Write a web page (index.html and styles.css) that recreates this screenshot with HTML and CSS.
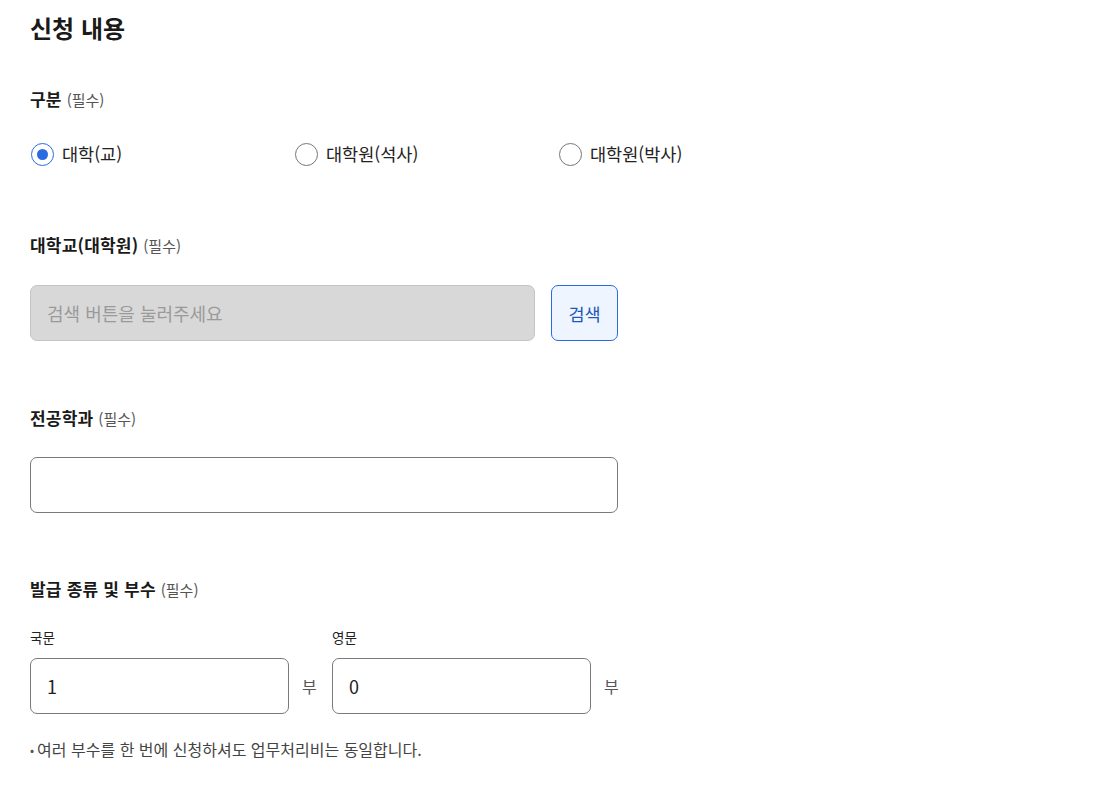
FILE: index.html
```html
<!DOCTYPE html>
<html lang="ko">
<head>
<meta charset="utf-8">
<link rel="stylesheet" href="styles.css">
</head>
<body>
<div class="page">
  <h2 class="title">신청 내용</h2>

  <div class="label l1">구분 <span class="req">(필수)</span></div>
  <div class="radios">
    <label class="radio"><span class="dot checked"></span><span>대학(교)</span></label>
    <label class="radio"><span class="dot"></span><span>대학원(석사)</span></label>
    <label class="radio"><span class="dot"></span><span>대학원(박사)</span></label>
  </div>

  <div class="label l2">대학교(대학원) <span class="req">(필수)</span></div>
  <div class="search-row">
    <div class="field disabled">검색 버튼을 눌러주세요</div>
    <button class="btn">검색</button>
  </div>

  <div class="label l3">전공학과 <span class="req">(필수)</span></div>
  <div class="field wide"></div>

  <div class="label l4">발급 종류 및 부수 <span class="req">(필수)</span></div>
  <div class="copies">
    <div class="copy">
      <div class="sub">국문</div>
      <div class="copy-row"><div class="field num">1</div><span class="unit">부</span></div>
    </div>
    <div class="copy">
      <div class="sub">영문</div>
      <div class="copy-row"><div class="field num">0</div><span class="unit">부</span></div>
    </div>
  </div>
  <p class="note"><span class="bullet">•</span>여러 부수를 한 번에 신청하셔도 업무처리비는 동일합니다.</p>
</div>
</body>
</html>
```

FILE: styles.css
```css
* { box-sizing: border-box; }
body {
  margin: 0;
  background: #fff;
  font-family: "Noto Sans CJK KR", "Noto Sans", sans-serif;
  color: #1f1f1f;
}
.page { padding: 12px 30px 0 30px; }
.title {
  margin: 0;
  font-size: 24px;
  line-height: 32px;
  height: 32px;
  font-weight: 700;
  color: #1a1a1a;
}
.label {
  font-size: 17px;
  line-height: 24px;
  height: 24px;
  font-weight: 700;
  color: #1a1a1a;
  letter-spacing: 0.2px;
}
.req { font-size: 15px; font-weight: 400; color: #555; letter-spacing: 0; line-height: 1; }
.l1 { margin-top: 43px; }
.l2 { margin-top: 67px; }
.l3 { margin-top: 65px; }
.l4 { margin-top: 64px; }
.radios { display: flex; margin-top: 31px; height: 24px; }
.radio {
  width: 264px;
  display: flex;
  align-items: center;
  gap: 8px;
  font-size: 17.5px;
  line-height: 24px;
  height: 24px;
  color: #222;
}
.dot {
  width: 23px; height: 23px;
  border-radius: 50%;
  border: 1.5px solid #767676;
  display: flex; align-items: center; justify-content: center;
  margin-left: 1px;
  flex: none;
}
.dot.checked { border-color: #2a6be0; }
.dot.checked::after {
  content: "";
  width: 11px; height: 11px;
  border-radius: 50%;
  background: #2a6be0;
}
.search-row { display: flex; gap: 16px; margin-top: 28px; }
.field {
  height: 56px;
  border: 1px solid #7a7a7a;
  border-radius: 7px;
  display: flex; align-items: center;
  padding: 0 16px;
  font-size: 18px;
  color: #222;
}
.field.disabled {
  width: 505px;
  background: #d8d8d8;
  border-color: #c4c4c4;
  color: #9a9a9a;
}
.btn {
  width: 67px; height: 56px;
  background: #eef5ff;
  border: 1px solid #2a6be0;
  border-radius: 7px;
  color: #1f56b8;
  font-family: inherit;
  font-size: 17.5px;
  padding: 0;
}
.field.wide { width: 588px; margin-top: 27px; }
.copies { display: flex; gap: 13px; margin-top: 26px; }
.sub { font-size: 13.5px; line-height: 20px; height: 20px; color: #222; }
.copy-row { display: flex; align-items: center; gap: 13px; margin-top: 11px; }
.field.num { width: 259px; }
.unit { font-size: 16px; color: #555; width: 17px; }
.note {
  margin: 24px 0 0 0;
  font-size: 16px;
  line-height: 22px;
  color: #444;
}
.bullet { font-size: 12px; margin-right: 3px; color: #555; vertical-align: 1px; }
```
